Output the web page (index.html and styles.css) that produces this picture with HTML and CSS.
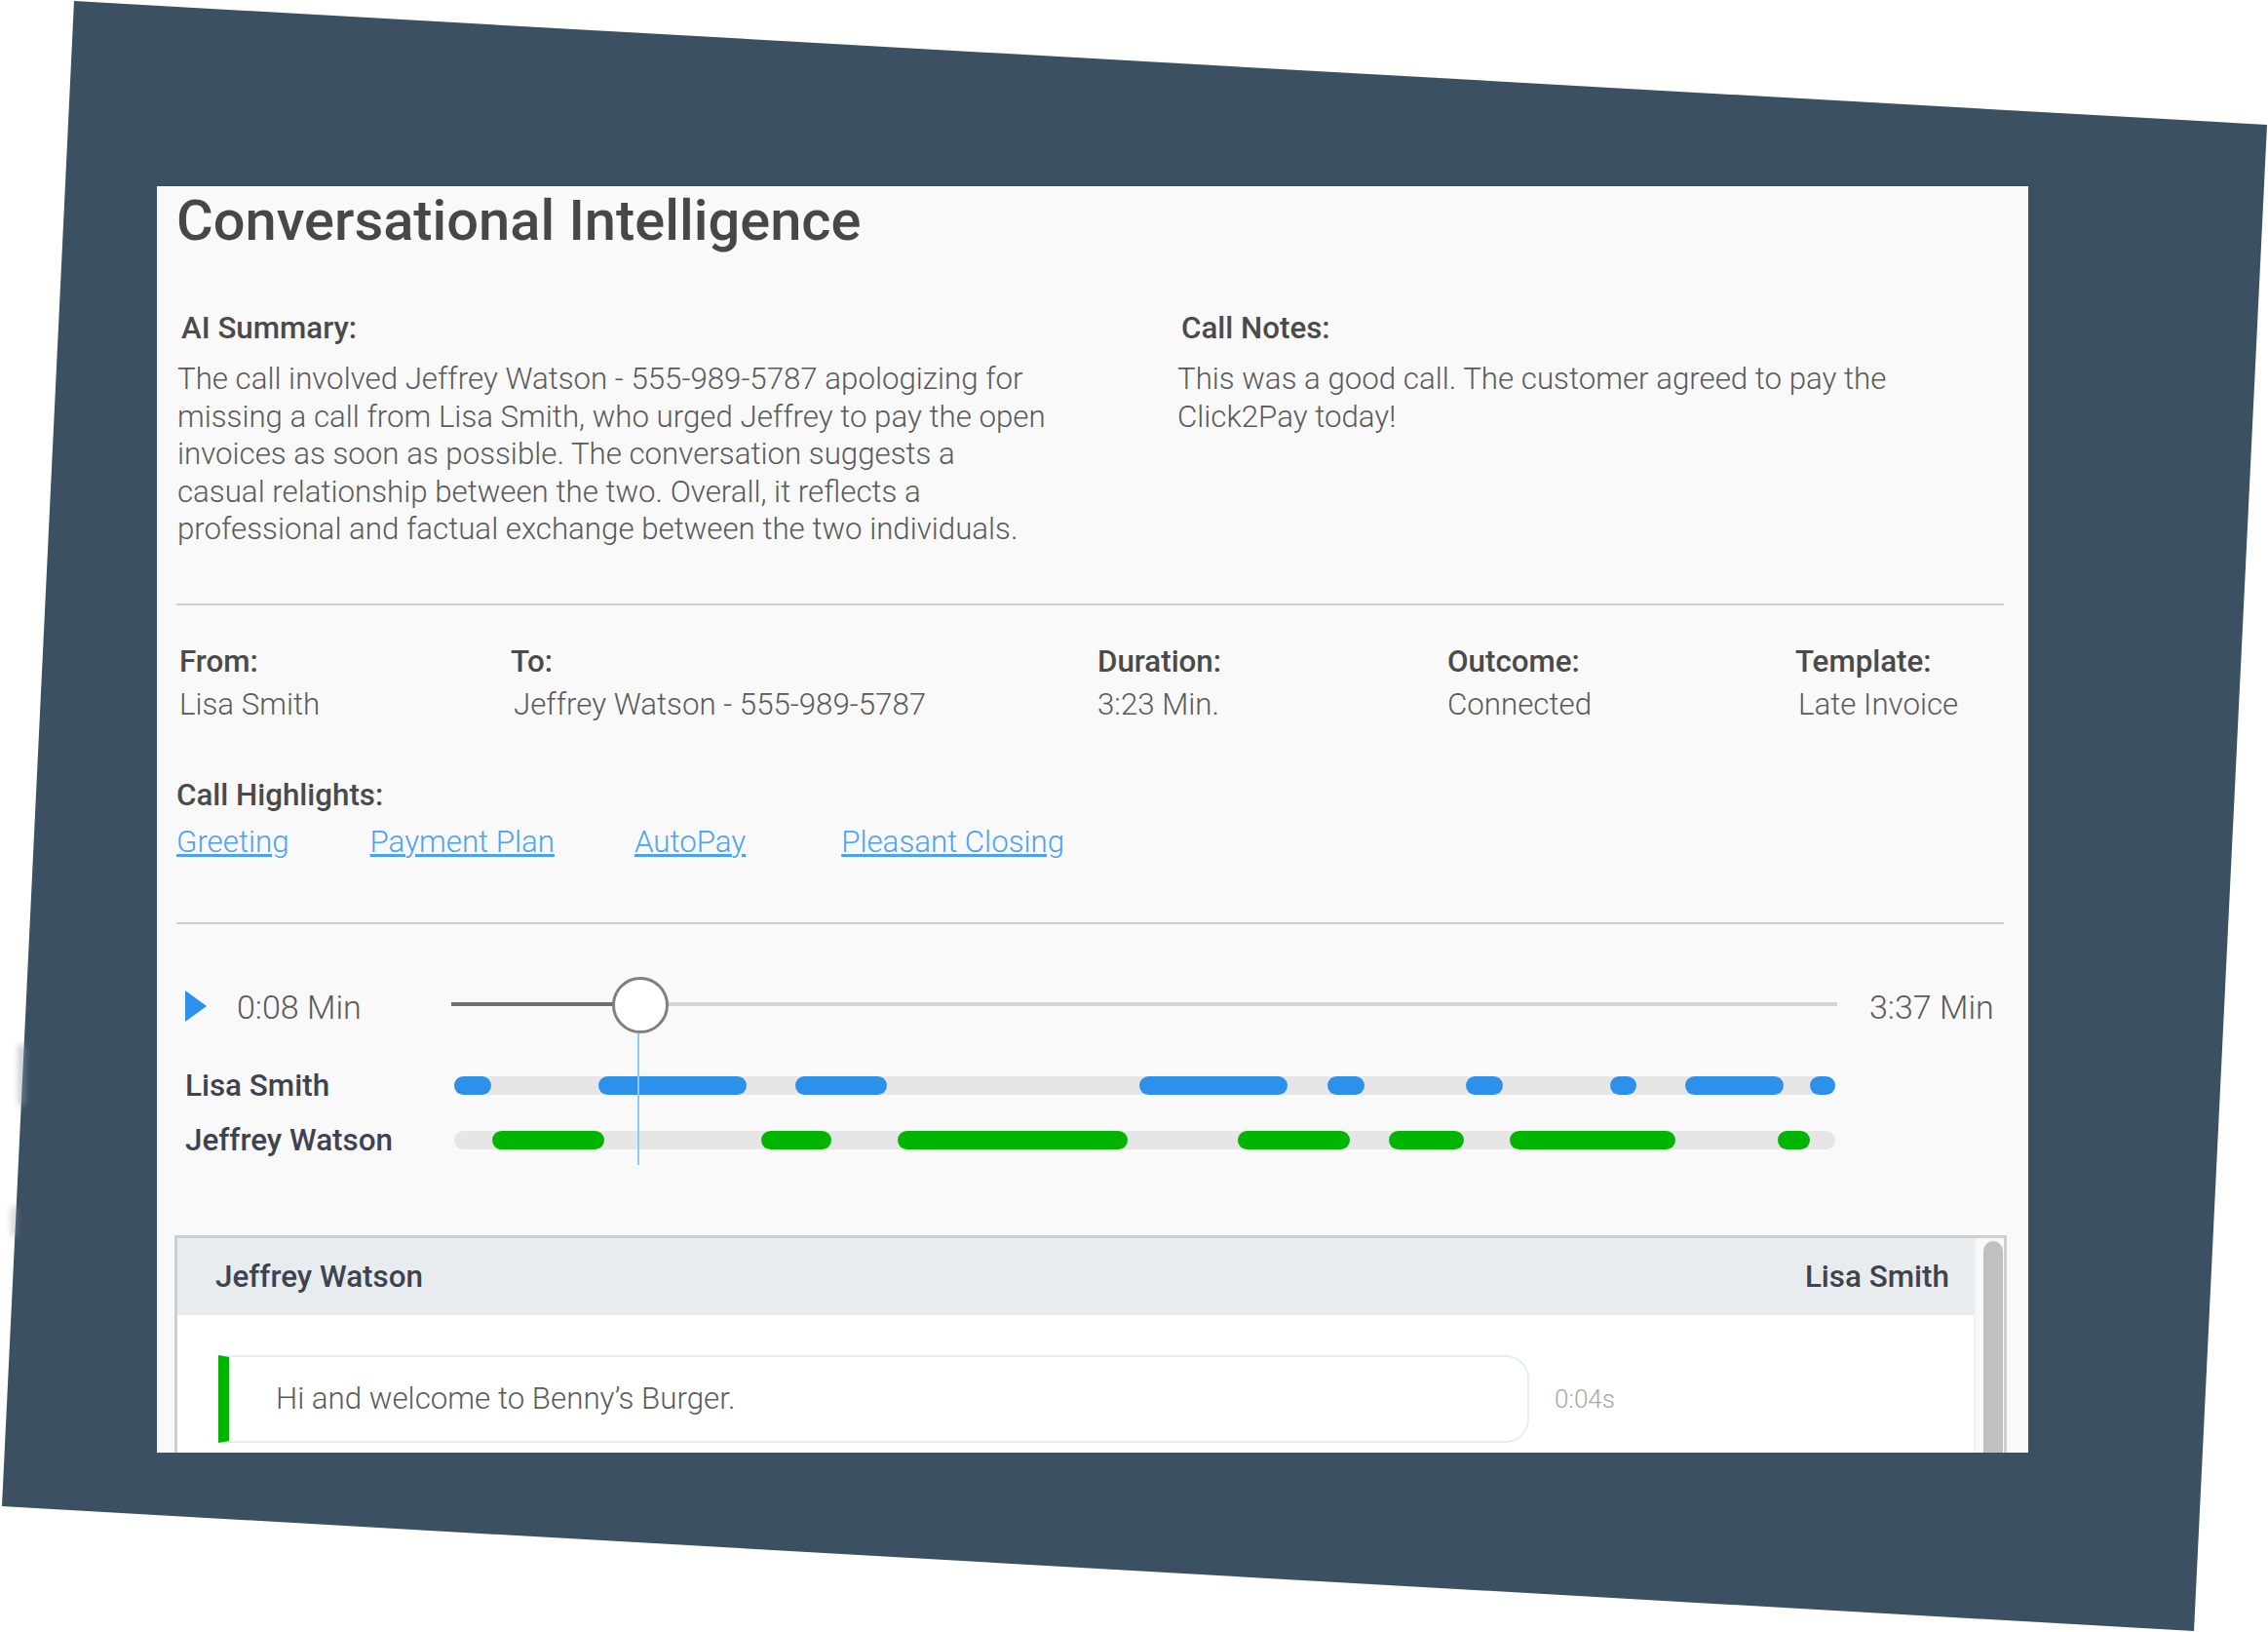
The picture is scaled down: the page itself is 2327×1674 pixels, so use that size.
FILE: index.html
```html
<!DOCTYPE html>
<html lang="en">
<head>
<meta charset="utf-8">
<title>Conversational Intelligence</title>
<link rel="stylesheet" href="styles.css">
</head>
<body>
<div class="backdrop"></div>
<div class="smudge smudge-a"></div>
<div class="smudge smudge-b"></div>
<main class="panel">
  <h1 class="title">Conversational Intelligence</h1>
  <section class="summary">
    <div class="summary-col">
      <h2 class="label label-inset">AI Summary:</h2>
      <p class="body-text">The call involved Jeffrey Watson - 555-989-5787 apologizing for<br>missing a call from Lisa Smith, who urged Jeffrey to pay the open<br>invoices as soon as possible. The conversation suggests a<br>casual relationship between the two. Overall, it reflects a<br>professional and factual exchange between the two individuals.</p>
    </div>
    <div class="summary-col">
      <h2 class="label label-inset">Call Notes:</h2>
      <p class="body-text">This was a good call. The customer agreed to pay the<br>Click2Pay today!</p>
    </div>
  </section>
  <hr class="rule rule-first">
  <section class="meta">
    <div><div class="label">From:</div><div class="meta-value">Lisa Smith</div></div>
    <div><div class="label">To:</div><div class="meta-value meta-offset">Jeffrey Watson - 555-989-5787</div></div>
    <div><div class="label">Duration:</div><div class="meta-value">3:23 Min.</div></div>
    <div><div class="label">Outcome:</div><div class="meta-value">Connected</div></div>
    <div><div class="label">Template:</div><div class="meta-value meta-offset">Late Invoice</div></div>
  </section>
  <section class="highlights">
    <div class="label">Call Highlights:</div>
    <nav class="links">
      <a href="#greeting" class="link link-1">Greeting</a>
      <a href="#plan" class="link link-2">Payment Plan</a>
      <a href="#autopay" class="link link-3">AutoPay</a>
      <a href="#closing" class="link">Pleasant Closing</a>
    </nav>
  </section>
  <hr class="rule rule-second">
  <section class="player">
    <div class="controls">
      <svg class="play" viewBox="0 0 22 32" width="22" height="32"><path d="M0 0 L22 16 L0 32 Z" fill="#2b91ea"/></svg>
      <span class="time time-now">0:08 Min</span>
      <div class="slider">
        <div class="slider-done"></div>
        <div class="thumb"></div>
      </div>
      <span class="time time-end">3:37 Min</span>
    </div>
    <div class="track-row">
      <span class="speaker">Lisa Smith</span>
      <div class="track">
        <i class="seg blue" style="left:0px;width:38px"></i>
        <i class="seg blue" style="left:148px;width:152px"></i>
        <i class="seg blue" style="left:350px;width:94px"></i>
        <i class="seg blue" style="left:703px;width:152px"></i>
        <i class="seg blue" style="left:896px;width:38px"></i>
        <i class="seg blue" style="left:1038px;width:38px"></i>
        <i class="seg blue" style="left:1186px;width:27px"></i>
        <i class="seg blue" style="left:1263px;width:101px"></i>
        <i class="seg blue" style="left:1391px;width:26px"></i>
      </div>
    </div>
    <div class="track-row track-row-second">
      <span class="speaker">Jeffrey Watson</span>
      <div class="track">
        <i class="seg green" style="left:39px;width:115px"></i>
        <i class="seg green" style="left:315px;width:72px"></i>
        <i class="seg green" style="left:455px;width:236px"></i>
        <i class="seg green" style="left:804px;width:115px"></i>
        <i class="seg green" style="left:959px;width:77px"></i>
        <i class="seg green" style="left:1083px;width:170px"></i>
        <i class="seg green" style="left:1358px;width:33px"></i>
      </div>
    </div>
    <div class="playhead"></div>
  </section>
  <section class="transcript">
    <div class="transcript-main">
      <header class="transcript-head"><span>Jeffrey Watson</span><span>Lisa Smith</span></header>
      <div class="message-row">
        <div class="bubble">Hi and welcome to Benny’s Burger.</div>
        <span class="stamp">0:04s</span>
      </div>
    </div>
    <div class="scrollbar"><div class="scroll-thumb"></div></div>
  </section>
</main>
</body>
</html>
```
FILE: styles.css
```css
* { box-sizing: border-box; }
html, body { margin: 0; height: 1674px; overflow: hidden; background: #fff; }
body { font-family: Roboto, "Liberation Sans", sans-serif; padding: 191px 0 0 161px; }

.backdrop {
  position: absolute; left: 0; top: 0; width: 2327px; height: 1674px;
  background: #3b5060;
  clip-path: polygon(76px 1px, 2326px 128px, 2251px 1673px, 2px 1545px);
}
.smudge { position: absolute; background: #8c9aa4; filter: blur(3px); opacity: .55; }
.smudge-a { left: 19px; top: 1072px; width: 7px; height: 62px; }
.smudge-b { left: 12px; top: 1238px; width: 5px; height: 30px; }

.panel {
  position: relative; width: 1920px; height: 1299px; overflow: hidden;
  background: #f9f9f9; padding: 0 25px 0 20px; color: #555;
}
.title { margin: 0; font-size: 57.8px; line-height: 70px; font-weight: 500; color: #474747; }

.label { font-size: 31.3px; line-height: 40px; font-weight: 500; color: #4a4a4a; margin: 0; }
.label-inset { padding-left: 4px; }
.body-text { margin: 13px 0 0; font-size: 31.25px; line-height: 38.6px; font-weight: 300; color: #5a5a5a; }

.summary { display: grid; grid-template-columns: 1026px 1fr; margin-top: 56px; padding-left: 1px; }

.rule { border: 0; height: 2px; background: #cfcfcf; margin: 0; }
.rule-first { margin-top: 56px; }
.rule-second { margin-top: 62px; }

.meta { display: grid; grid-template-columns: 340px 602px 359px 357px 1fr; margin-top: 38px; padding-left: 3px; }
.meta-value { font-size: 31.25px; line-height: 40px; font-weight: 300; color: #5a5a5a; margin-top: 4px; }
.meta-offset { padding-left: 3px; }

.highlights { margin-top: 53px; }
.links { display: flex; margin-top: 8px; }
.link { font-size: 31.25px; line-height: 40px; font-weight: 300; color: #4aa3f2; text-decoration: underline; }
.link-1 { margin-right: 83px; }
.link-2 { margin-right: 82px; }
.link-3 { margin-right: 98px; }

.player { position: relative; margin-top: 54px; padding-left: 9px; }
.controls { display: flex; align-items: center; height: 60px; }
.play { flex: none; }
.time { font-size: 34px; font-weight: 300; color: #5a5a5a; padding-top: 2px; }
.time-now { margin-left: 31px; width: 220px; flex: none; }
.slider { position: relative; width: 1422px; height: 4px; background: #d4d4d4; flex: none; margin-top: -3px; }
.slider-done { width: 170px; height: 4px; background: #707070; }
.thumb {
  position: absolute; left: 165px; top: -26px; width: 58px; height: 58px; border-radius: 50%;
  background: #fff; border: 3px solid #808080;
}
.time-end { margin-left: 33px; }

.track-row { display: flex; align-items: center; height: 40px; margin-top: 32px; }
.track-row-second { margin-top: 16px; }
.speaker { width: 276px; flex: none; font-size: 31.4px; font-weight: 500; color: #3d4350; }
.track { position: relative; width: 1417px; height: 19px; border-radius: 10px; background: #e6e6e6; flex: none; }
.seg { position: absolute; top: 0; height: 19px; border-radius: 10px; }
.blue { background: #2b91ea; }
.green { background: #00b500; }
.playhead { position: absolute; left: 473px; top: 58px; width: 2px; height: 135px; background: #8fc8fb; }

.transcript {
  display: flex; margin-top: 77px; margin-left: -2px; width: 1880px; height: 260px;
  border: solid #cdd0d2; border-width: 3px 3px 0 3px; background: #fff;
}
.transcript-main { flex: 1; min-width: 0; }
.transcript-head {
  display: flex; justify-content: space-between; align-items: center; height: 79px; padding: 0 25px 0 39px;
  background: #e9ecef; font-size: 31.4px; font-weight: 500; color: #3d4350;
}
.message-row { display: flex; align-items: center; margin-top: 41px; padding-left: 42px; }
.bubble {
  width: 1345px; height: 90px; display: flex; align-items: center; padding-left: 48px;
  background: #fff; border: 2px solid #e3edf7; border-left: 11px solid #00b500;
  border-radius: 0 24px 24px 0; font-size: 31.3px; font-weight: 300; color: #5a5a5a;
}
.stamp { margin-left: 26px; font-size: 26px; font-weight: 300; color: #a8a8a8; }
.scrollbar { width: 31px; background: #f8f8f8; border-left: 2px solid #efefef; padding: 3px 0 0 8px; flex: none; }
.scroll-thumb { width: 20px; height: 300px; border-radius: 10px; background: #c0c0c0; }
```
